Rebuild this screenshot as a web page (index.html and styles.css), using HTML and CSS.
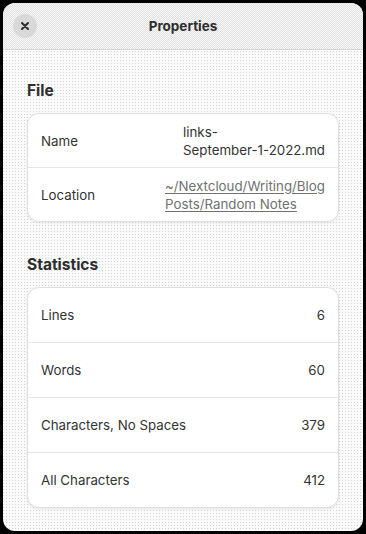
FILE: index.html
```html
<!DOCTYPE html>
<html>
<head>
<meta charset="utf-8">
<link rel="stylesheet" href="styles.css">
</head>
<body>
<div class="window">
  <header class="titlebar">
    <button class="close" aria-label="Close">
      <svg width="10" height="10" viewBox="0 0 10 10"><path d="M2 2 L8 8 M8 2 L2 8" stroke="#2e2e2e" stroke-width="2" stroke-linecap="round"/></svg>
    </button>
    <div class="title">Properties</div>
  </header>
  <main class="content">
    <h2 class="heading">File</h2>
    <div class="card">
      <div class="row">
        <div class="label">Name</div>
        <div class="value">links-<br>September-1-2022.md</div>
      </div>
      <div class="row">
        <div class="label">Location</div>
        <div class="value"><a class="link" href="#">~/Nextcloud/Writing/Blog Posts/Random Notes</a></div>
      </div>
    </div>
    <h2 class="heading heading-second">Statistics</h2>
    <div class="card">
      <div class="row stat"><div class="label">Lines</div><div class="num">6</div></div>
      <div class="row stat"><div class="label">Words</div><div class="num">60</div></div>
      <div class="row stat"><div class="label">Characters, No Spaces</div><div class="num">379</div></div>
      <div class="row stat"><div class="label">All Characters</div><div class="num">412</div></div>
    </div>
  </main>
</div>
</body>
</html>
```
FILE: styles.css
```css
html, body {
  margin: 0;
  padding: 0;
  background: #000;
}
body {
  font-family: Inter, "Noto Sans", sans-serif;
  color: #333;
}
.window {
  margin: 3px;
  width: 360px;
  height: 528px;
  border-radius: 12px;
  overflow: hidden;
  background:
    conic-gradient(from 270deg at 1px 1px, #d4d4d4 90deg, #fafafa 0) 0 0 / 3px 3px;
  display: flex;
  flex-direction: column;
}
.titlebar {
  height: 46px;
  flex: none;
  border-bottom: 1px solid #d6d6d6;
  background: repeating-conic-gradient(#e2e2e2 0 25%, #f7f7f7 0 50%) 0 0 / 2px 2px;
  display: flex;
  align-items: center;
  justify-content: center;
  position: relative;
}
.close {
  position: absolute;
  left: 10px;
  top: 11px;
  width: 24px;
  height: 24px;
  border-radius: 50%;
  border: none;
  padding: 0;
  background: #d9d9d9;
  display: flex;
  align-items: center;
  justify-content: center;
}
.title {
  font-weight: 700;
  font-size: 13.5px;
  color: #2e2e2e;
}
.content {
  padding: 31px 24px 0 24px;
}
.heading {
  margin: 0 0 12px 0;
  font-size: 15.5px;
  line-height: 20px;
  font-weight: 700;
  color: #2e2e2e;
}
.heading-second {
  margin-top: 33px;
}
.card {
  background: #fff;
  border: 1px solid #e0e0e0;
  border-radius: 12px;
  box-shadow: 0 1px 3px rgba(0,0,0,0.08);
}
.row {
  display: flex;
  align-items: center;
  min-height: 53px;
  padding: 0 13px;
  font-size: 13.3px;
  line-height: 18px;
}
.row + .row {
  border-top: 1px solid #e6e6e6;
}
.row.stat {
  min-height: 54px;
  justify-content: space-between;
}
.label {
  flex: 1;
}
.value {
  flex: none;
  max-width: 160px;
  margin-left: auto;
  color: #333;
}
.link {
  color: #717171;
  text-decoration: underline;
  text-underline-offset: 2px;
}
.num {
  text-align: right;
}
```
